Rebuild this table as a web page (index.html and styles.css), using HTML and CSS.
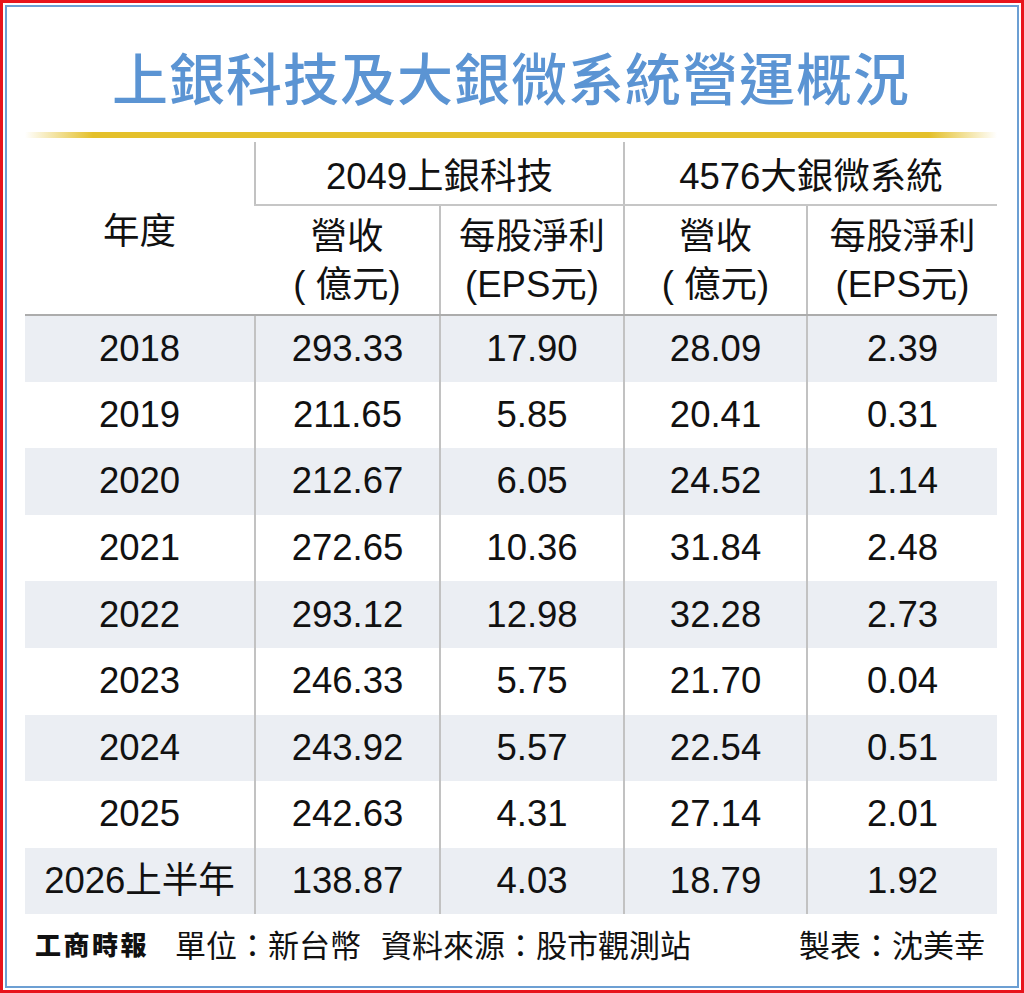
FILE: index.html
```html
<!DOCTYPE html>
<html lang="zh-Hant">
<head>
<meta charset="utf-8">
<title>上銀科技及大銀微系統營運概況</title>
<link rel="stylesheet" href="styles.css">
</head>
<body>
<div class="frame">
  <div class="inner">
    <h1 class="title">上銀科技及大銀微系統營運概況</h1>
    <div class="rule"></div>
    <table class="data">
      <colgroup>
        <col class="c1"><col class="c2"><col class="c3"><col class="c4"><col class="c5">
      </colgroup>
      <thead>
        <tr class="h1row">
          <th rowspan="2" class="year-h">年度</th>
          <th colspan="2" class="grp">2049上銀科技</th>
          <th colspan="2" class="grp">4576大銀微系統</th>
        </tr>
        <tr class="h2row">
          <th>營收<br>(&nbsp;億元)</th>
          <th>每股淨利<br>(EPS元)</th>
          <th>營收<br>(&nbsp;億元)</th>
          <th>每股淨利<br>(EPS元)</th>
        </tr>
      </thead>
      <tbody>
        <tr class="band"><td>2018</td><td>293.33</td><td>17.90</td><td>28.09</td><td>2.39</td></tr>
        <tr><td>2019</td><td>211.65</td><td>5.85</td><td>20.41</td><td>0.31</td></tr>
        <tr class="band"><td>2020</td><td>212.67</td><td>6.05</td><td>24.52</td><td>1.14</td></tr>
        <tr><td>2021</td><td>272.65</td><td>10.36</td><td>31.84</td><td>2.48</td></tr>
        <tr class="band"><td>2022</td><td>293.12</td><td>12.98</td><td>32.28</td><td>2.73</td></tr>
        <tr><td>2023</td><td>246.33</td><td>5.75</td><td>21.70</td><td>0.04</td></tr>
        <tr class="band"><td>2024</td><td>243.92</td><td>5.57</td><td>22.54</td><td>0.51</td></tr>
        <tr><td>2025</td><td>242.63</td><td>4.31</td><td>27.14</td><td>2.01</td></tr>
        <tr class="band"><td>2026上半年</td><td>138.87</td><td>4.03</td><td>18.79</td><td>1.92</td></tr>
      </tbody>
    </table>
    <div class="footer">
      <div class="left">
        <span class="logo">工商時報</span>
        <span class="note">單位：新台幣</span>
        <span class="note gap">資料來源：股市觀測站</span>
      </div>
      <span class="note">製表：沈美幸</span>
    </div>
  </div>
</div>
</body>
</html>
```

FILE: styles.css
```css
html, body {
  margin: 0;
  padding: 0;
  background: #ffffff;
}

.frame {
  width: 1024px;
  height: 993px;
  box-sizing: border-box;
  border: 3px solid #e8141c;
  padding: 2px;
  background: #ffffff;
}

.inner {
  height: 100%;
  box-sizing: border-box;
  border: 2px solid #6c9fd3;
  padding: 0 20px 0 18px;
  font-family: "Liberation Sans", "Noto Sans CJK TC", sans-serif;
  color: #111111;
}

.title {
  margin: 0;
  height: 125px;
  box-sizing: border-box;
  padding-top: 12px;
  display: flex;
  align-items: center;
  justify-content: center;
  font-family: "Noto Sans CJK TC", sans-serif;
  font-size: 56px;
  font-weight: 500;
  letter-spacing: 1px;
  color: #5b94d3;
}

.rule {
  height: 6px;
  background: linear-gradient(to right,
    rgba(228, 192, 40, 0) 0%,
    #e4c02a 7%,
    #e4c02a 93%,
    rgba(228, 192, 40, 0) 100%);
}

.data {
  width: 972px;
  margin-top: 4px;
  border-collapse: collapse;
  table-layout: fixed;
  font-size: 36.5px;
}

.c1 { width: 230px; }
.c2 { width: 185px; }
.c3 { width: 184px; }
.c4 { width: 183px; }
.c5 { width: 190px; }

.data th,
.data td {
  padding: 0;
  text-align: center;
  vertical-align: middle;
  font-weight: normal;
  border-left: 2px solid #c2c2c2;
}

.data th:first-child,
.data td:first-child {
  border-left: none;
}

.h2row th {
  border-left: 2px solid #c2c2c2;
}

.h1row {
  height: 63px;
}

.grp {
  padding-top: 8px;
  border-bottom: 2px solid #c6c6c6;
}

.h2row {
  height: 110px;
}

.h2row th {
  line-height: 48px;
  padding-top: 2px;
  border-bottom: 2px solid #acacac;
}

.year-h {
  border-bottom: 2px solid #acacac;
}

.data tbody tr {
  height: 66.6px;
}

.data tbody td {
  line-height: 40px;
}

.band td {
  background: #ebeef3;
}

.footer {
  height: 58px;
  display: flex;
  align-items: center;
  justify-content: space-between;
  padding: 0 12px 0 10px;
}

.left {
  display: flex;
  align-items: center;
}

.logo {
  font-family: "Noto Sans CJK TC", sans-serif;
  font-weight: 900;
  font-size: 26px;
  letter-spacing: 2.5px;
  margin-right: 26px;
  color: #111111;
}

.note {
  font-family: "Noto Sans CJK TC", sans-serif;
  font-size: 31px;
  font-weight: 400;
  color: #111111;
}

.gap {
  margin-left: 20px;
}
```
